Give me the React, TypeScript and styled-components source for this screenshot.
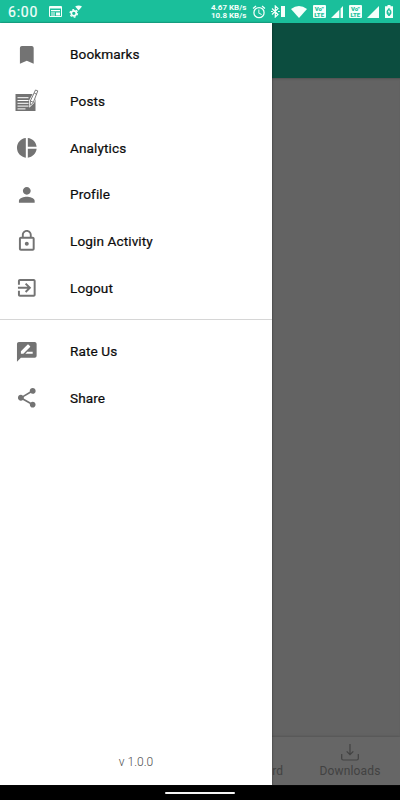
import React from "react";
import styled, { createGlobalStyle } from "styled-components";

const GlobalStyle = createGlobalStyle`
  * { box-sizing: border-box; }
  body { margin: 0; font-family: Roboto, sans-serif; }
`;

const Screen = styled.div`
  width: 400px;
  height: 800px;
  display: flex;
  flex-direction: column;
  overflow: hidden;
  background: #000;
`;

const StatusBar = styled.header`
  height: 23px;
  flex: none;
  display: flex;
  align-items: center;
  justify-content: space-between;
  padding: 0 7px 0 8px;
  background: #1abf9b;
  color: #f4fffb;
`;

const StatusGroup = styled.div<{ $gap: number }>`
  display: flex;
  align-items: center;
  gap: ${(p) => p.$gap}px;
`;

const Clock = styled.span`
  width: 31px;
  margin-right: 4px;
  padding-top: 1px;
  font-size: 14px;
  line-height: 22px;
  letter-spacing: 0.8px;
  white-space: nowrap;
  -webkit-text-stroke: 0.2px currentColor;
`;

const NetSpeed = styled.div`
  width: 38px;
  margin-right: 0;
  padding-top: 1px;
  font-size: 8px;
  font-weight: 700;
  line-height: 8px;
  text-align: right;
  white-space: nowrap;
`;

const VolteBadge = styled.div`
  width: 13px;
  height: 13px;
  padding-top: 1px;
  border-radius: 1px;
  background: #f4fffb;
  color: #1abf9b;
  font-size: 6px;
  font-weight: 900;
  line-height: 5.5px;
  text-align: center;
  white-space: nowrap;
`;

const Glyph = styled.svg<{ $w: number; $h?: number }>`
  display: block;
  flex: none;
  width: ${(p) => p.$w}px;
  height: ${(p) => p.$h ?? p.$w}px;
  fill: currentColor;
`;

const Body = styled.div`
  position: relative;
  height: 762px;
  flex: none;
  display: flex;
  flex-direction: column;
`;

const Toolbar = styled.div`
  height: 55px;
  background: #0c4d3f;
`;

const Content = styled.main`
  flex: 1;
  background: #636363;
  box-shadow: inset 0 2px 2px -1px #505050;
`;

const BottomNav = styled.nav`
  height: 48px;
  display: grid;
  grid-template-columns: 100px 100px 107px 86px;
  background: #666;
  box-shadow: 0 -1px 2px #565656;
`;

const NavTab = styled.div<{ $column: number }>`
  grid-column: ${(p) => p.$column};
  display: flex;
  flex-direction: column;
  align-items: center;
  padding-top: 5px;
  color: #424242;
  font-size: 12px;
  line-height: 14px;
  letter-spacing: 0.15px;
`;

const NavIconBox = styled.div`
  height: 22px;
`;

const Drawer = styled.aside`
  position: absolute;
  inset: 0 auto 0 0;
  width: 272px;
  display: flex;
  flex-direction: column;
  padding-top: 8px;
  background: #fff;
  box-shadow: 0 0 2px rgba(0, 0, 0, 0.55);
`;

const MenuItem = styled.div`
  height: 46.7px;
  flex: none;
  display: flex;
  align-items: center;
  padding-left: 15px;
  color: #737373;
`;

const IconBox = styled.div`
  width: 55px;
  flex: none;
`;

const MenuLabel = styled.span`
  color: #0c0c0c;
  font-size: 13.6px;
  font-weight: 400;
  letter-spacing: 0.1px;
  -webkit-text-stroke: 0.22px currentColor;
`;

const Divider = styled.div`
  height: 1px;
  flex: none;
  margin: 8px 0;
  background: #d6d6d6;
`;

const Version = styled.div`
  margin: auto 0 14px;
  color: #4c4c4c;
  font-size: 12px;
  font-weight: 300;
  line-height: 18px;
  text-align: center;
`;

const GestureBar = styled.footer`
  flex: 1;
  display: flex;
  justify-content: center;
  padding-top: 7px;
`;

const GestureHandle = styled.div`
  width: 70px;
  height: 2px;
  border-radius: 1px;
  background: #f5f5f5;
`;

const PostIcon = () => (
  <Glyph $w={24} viewBox="0 0 24 24">
    <path d="M.5 5h20v17H.5z" />
    <path d="M2.5 8.7h11M2.5 11.5h11M2.5 14.3h11M2.5 17.1h11M2.5 19.9h8" stroke="#fff" strokeWidth="1" fill="none" />
    <path d="M20.6 1l2.4 1-4.6 11.6-3.4 3.4-.2-5z" fill="#fff" stroke="#fff" strokeWidth="1.6" />
    <path d="M20.5 1l2.3.9-4.5 11.5-2.9 2.9-.1-4.3zM19.3 4.2l2.4 1M15.4 12l2.9 1.3" fill="none" stroke="#6b6b6b" strokeWidth=".9" />
  </Glyph>
);

const iconPaths: Record<string, string> = {
  Bookmarks: "M17 3H7c-1.1 0-2 .9-2 2v16l7-3 7 3V5c0-1.1-.9-2-2-2z",
  Analytics:
    "M11 2v20c-5.07-.5-9-4.79-9-10s3.93-9.5 9-10zm2.03 0v8.99H22c-.47-4.74-4.24-8.52-8.97-8.99zm0 11.01V22c4.74-.47 8.5-4.25 8.97-8.99h-8.97z",
  Profile:
    "M12 12c2.21 0 4-1.79 4-4s-1.79-4-4-4-4 1.79-4 4 1.79 4 4 4zm0 2c-2.67 0-8 1.34-8 4v2h16v-2c0-2.66-5.33-4-8-4z",
  "Login Activity":
    "M12 17c1.1 0 2-.9 2-2s-.9-2-2-2-2 .9-2 2 .9 2 2 2zm6-9h-1V6c0-2.76-2.24-5-5-5S7 3.24 7 6h1.9c0-1.71 1.39-3.1 3.1-3.1 1.71 0 3.1 1.39 3.1 3.1v2H6c-1.1 0-2 .9-2 2v10c0 1.1.9 2 2 2h12c1.1 0 2-.9 2-2V10c0-1.1-.9-2-2-2zm0 12H6V10h12v10zM7 6h1.9v2H7z",
  Logout:
    "M10.09 15.59L11.5 17l5-5-5-5-1.41 1.41L12.67 11H3v2h9.67l-2.58 2.59zM19 3H5c-1.11 0-2 .9-2 2v4h2V5h14v14H5v-4H3v4c0 1.1.89 2 2 2h14c1.1 0 2-.9 2-2V5c0-1.1-.9-2-2-2z",
  "Rate Us":
    "M20 2H4c-1.1 0-1.99.9-1.99 2L2 22l4-4h14c1.1 0 2-.9 2-2V4c0-1.1-.9-2-2-2zM6 14v-2.47l6.88-6.88c.2-.2.51-.2.71 0l1.77 1.77c.2.2.2.51 0 .71L8.47 14H6zm12 0h-7.5l2-2H18v2z",
  Share:
    "M18 16.08c-.76 0-1.44.3-1.96.77L8.91 12.7c.05-.23.09-.46.09-.7s-.04-.47-.09-.7l7.05-4.11c.54.5 1.25.81 2.04.81 1.66 0 3-1.34 3-3s-1.34-3-3-3-3 1.34-3 3c0 .24.04.47.09.7L8.04 9.81C7.5 9.31 6.79 9 6 9c-1.66 0-3 1.34-3 3s1.34 3 3 3c.79 0 1.5-.31 2.04-.81l7.12 4.16c-.05.21-.08.43-.08.65 0 1.61 1.31 2.92 2.92 2.92s2.92-1.31 2.92-2.92-1.31-2.92-2.92-2.92z",
};

const Item = ({ label }: { label: string }) => (
  <MenuItem>
    <IconBox>
      {label === "Posts" ? (
        <PostIcon />
      ) : (
        <Glyph $w={23.6} viewBox="0 0 24 24">
          <path d={iconPaths[label]} />
        </Glyph>
      )}
    </IconBox>
    <MenuLabel>{label}</MenuLabel>
  </MenuItem>
);

const Volte = () => (
  <VolteBadge>
    Vo"
    <br />
    LTE
  </VolteBadge>
);

export default function App() {
  return (
    <Screen>
      <GlobalStyle />
      <StatusBar>
        <StatusGroup $gap={6}>
          <Clock>6:00</Clock>
          <Glyph $w={13} $h={11} viewBox="0 0 13 11">
            <path fillRule="evenodd" d="M1 0h11a1 1 0 011 1v9a1 1 0 01-1 1H1a1 1 0 01-1-1V1a1 1 0 011-1zm0 2.6V10h11V2.6zM2 4h9v1.3H2zm0 2.4h4v1H2zm0 2h4v1H2zm5-2h4v3H7z" />
          </Glyph>
          <Glyph $w={14} $h={13} viewBox="0 0 14 13">
            <circle cx="5.8" cy="8.3" r="2.5" fill="none" stroke="currentColor" strokeWidth="1.7" />
            <circle cx="5.8" cy="8.3" r="3.7" fill="none" stroke="currentColor" strokeWidth="1.3" strokeDasharray="1.9 1.97" />
            <path d="M7.2 1.6Q10.6-.8 14 1.6L10.6 5.6z" />
          </Glyph>
        </StatusGroup>
        <StatusGroup $gap={5.6}>
          <NetSpeed>
            4.67 KB/s
            <br />
            10.8 KB/s
          </NetSpeed>
          <Glyph $w={14} viewBox="1 1 22 22">
            <path d="M22 5.7l-4.6-3.9-1.3 1.5 4.6 3.9zM7.9 3.4L6.6 1.9 2 5.7l1.3 1.5zM12.5 8H11v6l4.8 2.9.7-1.2-4-2.4zM12 4a9 9 0 100 18 9 9 0 000-18zm0 16a7 7 0 110-14 7 7 0 010 14z" />
          </Glyph>
          <Glyph $w={14} $h={13} viewBox="0 0 14 13">
            <path d="M1 3.5l6 6L4.3 12V1L7 3.5l-6 6M0 6.5h1.8M7 6.5h1.8" fill="none" stroke="currentColor" strokeWidth="1.2" />
            <path d="M10 1h4v11h-4z" />
          </Glyph>
          <Glyph $w={16} $h={12} viewBox="0 0 16 12">
            <path d="M0 3Q8-2.8 16 3L8 12z" />
          </Glyph>
          <Volte />
          <Glyph $w={12} viewBox="0 0 12 12">
            <path d="M0 12L8.3 3.7V12zM9.6 2.4L12 0v12H9.6z" />
          </Glyph>
          <Volte />
          <Glyph $w={12} viewBox="0 0 12 12">
            <path d="M0 12L12 0v12z" />
          </Glyph>
          <Glyph $w={8} $h={13} viewBox="0 0 8 13">
            <path fillRule="evenodd" d="M2.5 0h3v1.3H8V13H0V1.3h2.5zM4 2.7L1.6 6v2.5L3.4 11h1.2l1.8-2.5V6zM4.3 4L2.8 7.3h1v2.2L5.3 6.2h-1z" />
          </Glyph>
        </StatusGroup>
      </StatusBar>
      <Body>
        <Toolbar />
        <Content />
        <BottomNav>
          <NavTab $column={3}>
            <NavIconBox />
            Dashboard
          </NavTab>
          <NavTab $column={4}>
            <NavIconBox>
              <Glyph $w={20} viewBox="0 0 20 20">
                <path d="M10 2v10.5M6.7 9.4L10 12.7l3.3-3.3M1.7 12v4.5a1.5 1.5 0 001.5 1.5h13.6a1.5 1.5 0 001.5-1.5V12" fill="none" stroke="currentColor" strokeWidth="1.2" />
              </Glyph>
            </NavIconBox>
            Downloads
          </NavTab>
        </BottomNav>
        <Drawer>
          {["Bookmarks", "Posts", "Analytics", "Profile", "Login Activity", "Logout"].map((label) => (
            <Item key={label} label={label} />
          ))}
          <Divider />
          {["Rate Us", "Share"].map((label) => (
            <Item key={label} label={label} />
          ))}
          <Version>v 1.0.0</Version>
        </Drawer>
      </Body>
      <GestureBar>
        <GestureHandle />
      </GestureBar>
    </Screen>
  );
}
